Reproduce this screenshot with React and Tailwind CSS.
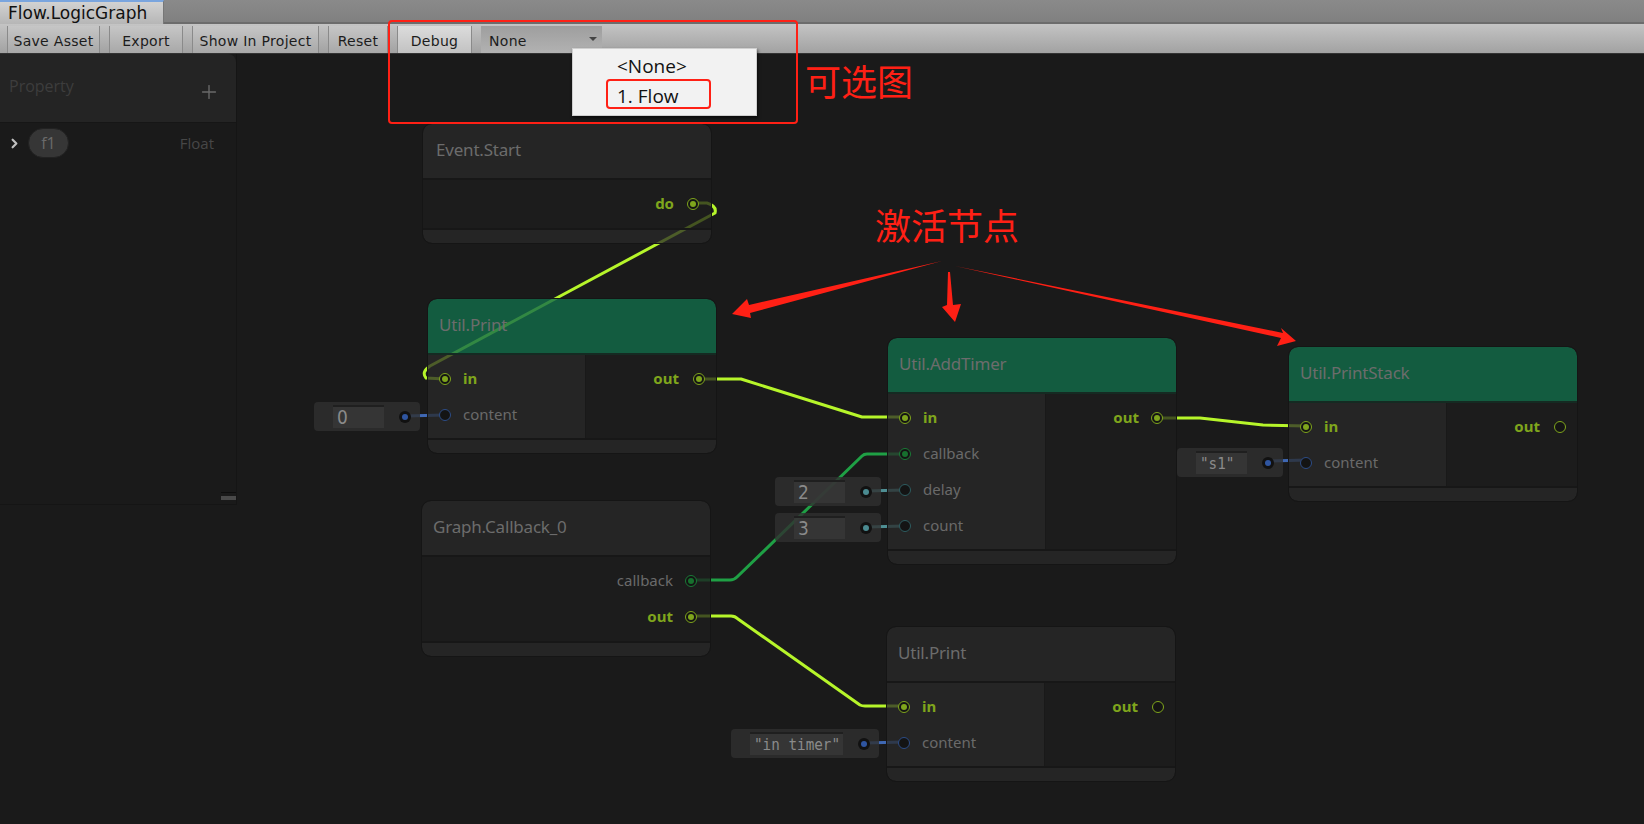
import { ChevronRight, Plus } from 'lucide-react'

// ── Toolbar ─────────────────────────────────────────────────────────────────

function ToolButton({ label, className }) {
  return (
    <div className={`h-[27px] flex items-center justify-center pt-[3px] border-x border-[#8a8a8a] bg-gradient-to-b text-[14px] tracking-[0.3px] text-[#1c1c1c] ${className}`}>
      {label}
    </div>
  )
}

const PLAIN_BTN = 'from-[#c6c6c6] to-[#a8a8a8]'

function TopBars() {
  return (
    <div className="font-['DejaVu_Sans',sans-serif]">
      <div className="h-6 bg-gradient-to-b from-[#8a8a8a] to-[#808080] border-b-2 border-[#6c6c6c]">
        <div className="w-[164px] h-[24px] border-t-2 border-[#7aa5de] border-r border-r-[#777] bg-gradient-to-b from-[#d2d2d2] to-[#b6b6b6] pl-2 text-[17px] leading-[22px] text-[#111]">
          Flow.LogicGraph
        </div>
      </div>
      <div className="h-[30px] flex items-start gap-[9px] pt-[2px] pl-[7px] border-b border-[#333] bg-gradient-to-b from-[#c4c4c4] to-[#a2a2a2]">
        <ToolButton label="Save Asset" className={`w-[93px] ${PLAIN_BTN}`} />
        <ToolButton label="Export" className={`w-[74px] ${PLAIN_BTN}`} />
        <ToolButton label="Show In Project" className={`w-[127px] ${PLAIN_BTN}`} />
        <ToolButton label="Reset" className={`w-[60px] ${PLAIN_BTN}`} />
        <ToolButton label="Debug" className="w-[75px] from-[#dcdcdc] to-[#c2c2c2]" />
        <div className="w-[121px] h-[27px] flex items-center justify-between pt-[3px] pl-[8px] pr-[5px] bg-gradient-to-b from-[#9e9e9e] to-[#b2b2b2] text-[14px] tracking-[0.3px] text-[#1c1c1c]">
          None
          <span className="w-0 h-0 mb-1 border-x-[4px] border-x-transparent border-t-[4px] border-t-[#444]" />
        </div>
      </div>
    </div>
  )
}

// ── Left property panel ─────────────────────────────────────────────────────

function PropertyPanel() {
  return (
    <div className="relative w-[237px] h-[451px] border-r border-b border-[#151515] font-['Open_Sans',sans-serif]">
      <div className="h-[69px] flex items-center justify-between pl-[9px] pr-[16px] rounded-tr-lg border-b border-[#161616] bg-[#242424]">
        <span className="text-[16px] -mt-[4px] text-[#3d3d3d]">Property</span>
        <Plus size={22} strokeWidth={1.5} className="mt-[7px] text-[#6a6a6a]" />
      </div>
      <div className="flex items-center h-[30px] mt-[5px] pl-[7px] pr-[22px]">
        <ChevronRight size={15} strokeWidth={3.5} className="text-[#c0c0c0]" />
        <div className="ml-[6px] w-[41px] h-[30px] flex items-center justify-center rounded-full bg-[#363636] border border-[#222] text-[16px] text-[#6a6a6a]">f1</div>
        <span className="ml-auto text-[15px] text-[#474747]">Float</span>
      </div>
      <div className="absolute right-0 bottom-[3px] w-[15px] h-[9px] border-t border-[#0e0e0e] pt-[3px]">
        <div className="h-[4px] bg-[#4a4a4a]" />
      </div>
    </div>
  )
}

// ── Graph node parts ────────────────────────────────────────────────────────

const PORT = {
  flow:    { ring: 'border-[#7fa51c]', dot: 'bg-[#7fa51c]' },
  flowOff: { ring: 'border-[#7fa51c]', dot: '' },
  call:    { ring: 'border-[#1a7a36]', dot: 'bg-[#17702e]' },
  blue:    { ring: 'border-[#2c4c86]', dot: '' },
  teal:    { ring: 'border-[#2d5c60]', dot: '' },
}

function Port({ kind }) {
  const { ring, dot } = PORT[kind]
  return (
    <span className={`w-3 h-3 shrink-0 flex items-center justify-center rounded-full border-[1.5px] bg-[#141414] ${ring}`}>
      {dot && <span className={`w-[6px] h-[6px] rounded-full ${dot}`} />}
    </span>
  )
}

function PinLabel({ flow, children }) {
  return flow
    ? <span className="-mt-[2px] text-[15px] font-bold text-[#7fa51c]">{children}</span>
    : <span className="-mt-[2px] text-[15px] text-[#6a6a6a]">{children}</span>
}

function InRow({ kind, label }) {
  return (
    <div className="h-9 flex items-center gap-3 pl-[11px]">
      <Port kind={kind} />
      <PinLabel flow={label === 'in'}>{label}</PinLabel>
    </div>
  )
}

function OutRow({ kind, label, outClass }) {
  return (
    <div className={`h-9 flex items-center justify-end ${outClass}`}>
      <PinLabel flow={label !== 'callback'}>{label}</PinLabel>
      <Port kind={kind} />
    </div>
  )
}

const OUT_WIDE = 'pr-[13px] gap-3'
const OUT_TIGHT = 'pr-[11px] gap-[14px]'

function GraphNode({ pos, title, active, inputs, outputs, outClass = OUT_TIGHT, titleClass = 'pl-[11px]' }) {
  return (
    <div className={`absolute w-[288px] rounded-[9px] overflow-hidden outline outline-1 outline-[#151515] font-['Noto_Sans',sans-serif] ${pos}`}>
      <div className={`h-[56px] flex items-center pb-[3px] text-[17px] tracking-[-0.2px] text-[#6c6c6c] border-b-2 ${titleClass} ${active ? 'bg-[#116d4a]/80 border-[#152a22]' : 'bg-[#2a2a2a]/75 border-[#171717]'}`}>
        {title}
      </div>
      {inputs ? (
        <div className="flex border-b-2 border-[#171717]">
          <div className="w-[158px] pt-[6px] pb-[5px] bg-[#2a2a2a]/75 border-r border-[#191919]">
            {inputs.map(p => <InRow key={p.label} {...p} />)}
          </div>
          <div className="flex-1 pt-[6px] pb-[5px] bg-[#1d1d1d]/75">
            {outputs.map(p => <OutRow key={p.label} {...p} outClass={outClass} />)}
          </div>
        </div>
      ) : (
        <div className="pt-[6px] pb-[6px] bg-[#1d1d1d]/75 border-b-2 border-[#171717]">
          {outputs.map(p => <OutRow key={p.label} {...p} outClass={outClass} />)}
        </div>
      )}
      <div className="h-[13px] bg-[#2a2a2a]/75" />
    </div>
  )
}

function ValueBox({ pos, inputW = 'w-[51px]', mono, text, portDot }) {
  return (
    <div className={`absolute h-[29px] flex items-center justify-between pl-[19px] pr-[9px] rounded-sm bg-[#303030]/80 ${pos}`}>
      <div className={`h-[23px] flex items-center pl-1 border-t-2 border-[#1f1f1f] bg-[#383838]/80 text-[#8a8a8a] ${inputW} ${mono ? "font-['DejaVu_Sans_Mono',monospace] text-[14.3px]" : "font-['DejaVu_Sans',sans-serif] text-[17px]"}`}>
        <span className="inline-block scale-y-[1.15]">{text}</span>
      </div>
      <span className="w-3 h-3 flex items-center justify-center rounded-full bg-[#111]">
        <span className={`w-[6px] h-[6px] rounded-full ${portDot}`} />
      </span>
    </div>
  )
}

// ── Wires (behind the nodes, which are see-through) ─────────────────────────

function Wires() {
  return (
    <svg className="absolute inset-0" width="1644" height="824" fill="none" strokeLinejoin="round">
      <g stroke="#b6f52a" strokeWidth="3">
        <path d="M693 203 L707 203 Q717 206 715 213 L430 366 Q421 372 426 378 L445 379" />
        <path d="M699 379 L741 379 L862 417 L905 417" />
        <path d="M1157 418 L1200 418 L1263 425 L1307 426" />
        <path d="M691 616 L731 616 Q735 616 738 619 L860 705 Q862 706 865 706 L904 706" />
      </g>
      <path d="M691 580 L730 580 Q734 580 737 577 L862 456 Q864 454 867 454 L905 454" stroke="#1fa045" strokeWidth="3" />
      <g stroke="#3f68b4" strokeWidth="3">
        <path d="M405 416 L445 415" />
        <path d="M1268 461 L1307 460" />
        <path d="M864 743 L904 742" />
      </g>
      <g stroke="#4f8f94" strokeWidth="3">
        <path d="M865 491 L905 490" />
        <path d="M865 527 L905 526" />
      </g>
    </svg>
  )
}

// ── Red annotations ─────────────────────────────────────────────────────────

function Annotations() {
  return (
    <>
      <div className="absolute left-[388px] top-[20px] w-[410px] h-[104px] rounded-[4px] border-2 border-[#ff2015]" />
      <div className="absolute left-[572px] top-[48px] w-[185px] h-[68px] pl-[44px] pt-[2px] border border-[#cfcfcf] bg-[#f2f2f2] shadow-[1px_2px_3px_rgba(0,0,0,0.6)] font-['Open_Sans',sans-serif] text-[19px] leading-[30px] text-[#111]">
        <div>&lt;None&gt;</div>
        <div>1. Flow</div>
      </div>
      <div className="absolute left-[606px] top-[79px] w-[105px] h-[30px] rounded-[4px] border-2 border-[#ff2015]" />
      <div className="absolute left-[805px] top-[57px] font-['Noto_Sans_CJK_SC',sans-serif] text-[36px] leading-[46px] text-[#ff2015]">可选图</div>
      <div className="absolute left-[875px] top-[201px] font-['Noto_Sans_CJK_SC',sans-serif] text-[36px] leading-[46px] text-[#ff2015]">激活节点</div>
      <svg className="absolute inset-0 pointer-events-none" width="1644" height="824" fill="#ff2015">
        <polygon points="942,261 749,305 747,299 732,314 751,318 750,313" />
        <polygon points="948,272 950,272 953,305 961,304 955,322 942,307 947,305" />
        <polygon points="955,266 1283,333 1281,328 1296,341 1277,346 1281,338" />
      </svg>
    </>
  )
}

export default function App() {
  return (
    <div className="relative w-[1644px] h-[824px] overflow-hidden bg-[#1a1a1a]">
      <TopBars />
      <PropertyPanel />
      <Wires />

      <GraphNode
        pos="left-[423px] top-[124px]"
        title="Event.Start"
        titleClass="pl-[13px]"
        outputs={[{ kind: 'flow', label: 'do' }]}
        outClass="pr-3 gap-[13px]"
      />
      <GraphNode
        pos="left-[428px] top-[299px]"
        title="Util.Print"
        active
        inputs={[{ kind: 'flow', label: 'in' }, { kind: 'blue', label: 'content' }]}
        outputs={[{ kind: 'flow', label: 'out' }]}
      />
      <GraphNode
        pos="left-[888px] top-[338px]"
        title="Util.AddTimer"
        active
        inputs={[
          { kind: 'flow', label: 'in' },
          { kind: 'call', label: 'callback' },
          { kind: 'teal', label: 'delay' },
          { kind: 'teal', label: 'count' },
        ]}
        outputs={[{ kind: 'flow', label: 'out' }]}
        outClass={OUT_WIDE}
      />
      <GraphNode
        pos="left-[1289px] top-[347px]"
        title="Util.PrintStack"
        active
        inputs={[{ kind: 'flow', label: 'in' }, { kind: 'blue', label: 'content' }]}
        outputs={[{ kind: 'flowOff', label: 'out' }]}
      />
      <GraphNode
        pos="left-[422px] top-[501px]"
        title="Graph.Callback_0"
        outputs={[{ kind: 'call', label: 'callback' }, { kind: 'flow', label: 'out' }]}
        outClass={OUT_WIDE}
      />
      <GraphNode
        pos="left-[887px] top-[627px]"
        title="Util.Print"
        inputs={[{ kind: 'flow', label: 'in' }, { kind: 'blue', label: 'content' }]}
        outputs={[{ kind: 'flowOff', label: 'out' }]}
      />

      <ValueBox pos="left-[314px] top-[402px] w-[106px]" text="0" portDot="bg-[#2f55a0]" />
      <ValueBox pos="left-[775px] top-[477px] w-[106px]" text="2" portDot="bg-[#4a8a90]" />
      <ValueBox pos="left-[775px] top-[513px] w-[106px]" text="3" portDot="bg-[#4a8a90]" />
      <ValueBox pos="left-[1177px] top-[448px] w-[106px]" mono text={'"s1"'} portDot="bg-[#2f55a0]" />
      <ValueBox pos="left-[731px] top-[729px] w-[148px]" inputW="w-[93px]" mono text={'"in timer"'} portDot="bg-[#2f55a0]" />

      <Annotations />
    </div>
  )
}
